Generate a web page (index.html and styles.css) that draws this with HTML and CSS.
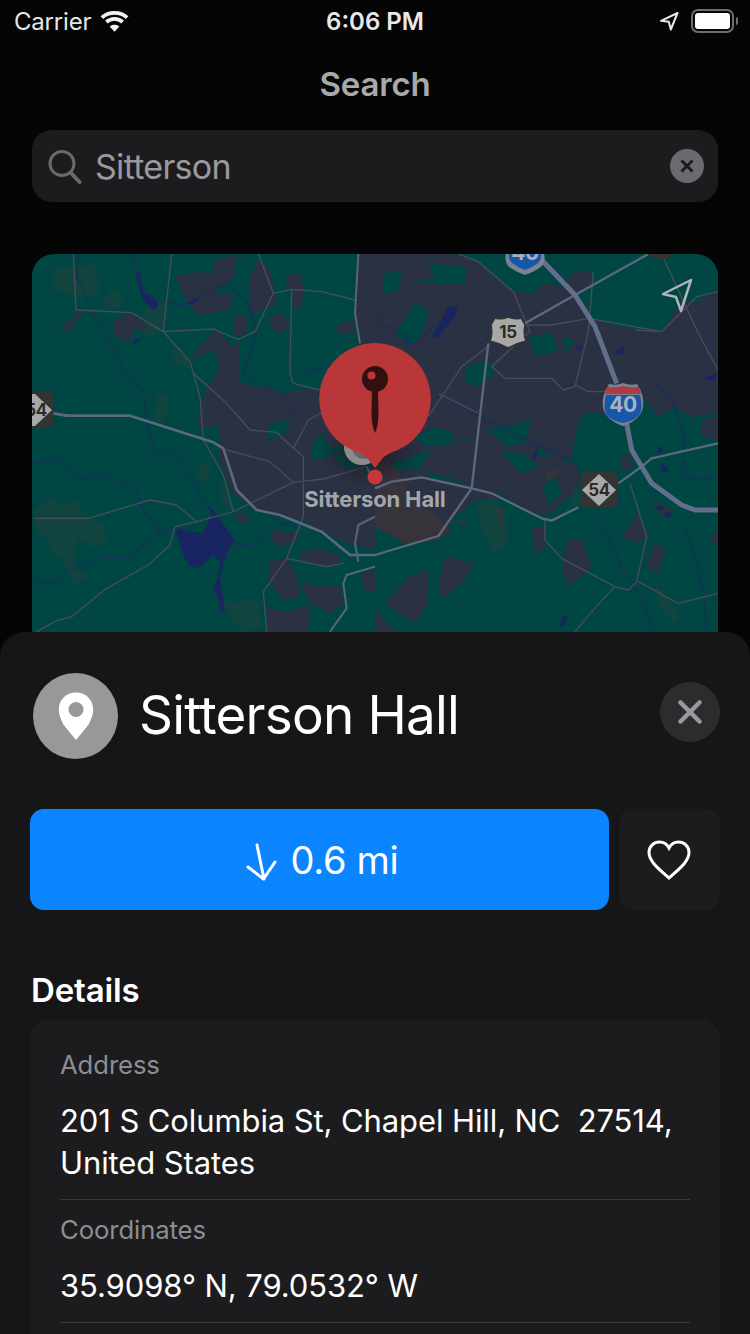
FILE: index.html
```html
<!DOCTYPE html>
<html lang="en">
<head>
<meta charset="utf-8">
<title>Search</title>
<link rel="stylesheet" href="styles.css">
</head>
<body>
<div class="screen">
  <div class="status">
    <div class="status-left">
      <span class="carrier">Carrier</span>
      <svg class="wifi" width="31" height="24" viewBox="0 0 32 24"><path class="wifi-arc" d="M3 9.500C10 3 22 3 29 9.500M7.600 14C12.400 9.800 19.600 9.800 24.400 14"/><path class="wifi-dot" d="M16 24l-5-5.200c2.800-2.400 7.200-2.400 10 0z"/></svg>
    </div>
    <span class="clock">6:06 PM</span>
    <div class="status-right">
      <svg width="20" height="20" viewBox="0 0 20 20"><path class="loc" d="M18.500 2 2 9.800l7.800 1 2 7.700z"/></svg>
      <div class="battery"><div class="battery-fill"></div></div>
      <div class="battery-tip"></div>
    </div>
  </div>

  <div class="nav">Search</div>

  <div class="search">
    <svg class="glass" width="36" height="36" viewBox="0 0 36 36"><circle class="glass-ring" cx="15" cy="14.500" r="12"/><path class="glass-ring glass-handle" d="M24 24l8.500 9"/></svg>
    <span class="search-text">Sitterson</span>
    <svg class="clear" width="34" height="34" viewBox="0 0 34 34"><circle class="clear-disc" cx="17" cy="17" r="17"/><path class="clear-x" d="M11.500 11.500l11 11m0-11l-11 11"/></svg>
  </div>

  <div class="map">
    <svg class="map-svg" width="686" height="378" viewBox="32 254 686 378">
      <defs>
        <radialGradient id="pinShade">
          <stop offset="0" stop-color="#15161c" stop-opacity=".75"/>
          <stop offset="1" stop-color="#15161c" stop-opacity="0"/>
        </radialGradient>
      </defs>
      <rect class="m-green" x="32" y="254" width="686" height="378"/>
      <g transform="translate(0 250) scale(.33333)">
        <path class="m-park" d="M160 55l130-10 5 90-60 5-60-20-15 0zM310 145l30-30 30 25-15 35-45 5zM400 230l50-70 50-10-5 90-50 20zM515 295l25-5 30 40-5 25-45-15zM470 435l30-5 10 20-20 70-25 0zM590 660l35-35 10 45-30 40zM660 700l15 0 20 80-25-10zM100 780l55-40 30 30 45-20 30 50 50 20 10 60-45 10-40-30-15 80 50 40-45 25-40-80-30-10-15-60-30 0zM670 1060l100-10 20 80-60 15-40-40z"/>
        <path class="m-slate" d="M610 440l50-90-20-50-70 30 20-30 60-60 50 50 20-20v130l80 15 50 15 50-10 60-5-5 65 45-10 125-30v460l-85-20-60-30-80-40-70-15-70-15-60-50-40-90v-110h-70zM1075 12h50v268h-45l-15-90zM525 80l65-15 50 5v-40l70-15-10 70-60 45h60l-10 50-90 15-30-25-30-60zM750 80l25-50 35 30 15 70v35l-75 30zM700 200l40-5v55l-40 10zM810 200l30-10 30 25-10 25-30 10-20-25zM1010 225l50-15 5 40h-55zM860 75l40-5 10 45-5 60h-25l-5-55-15-10zM340 210l55-20 55 45-50 5-15 35-15-5-25-10zM180 210l25 10 30-35 15 5-45 60zM820 840l80 10-20 30-40 10-30-30zM900 905l50-10 70 20v30l-60 5-60-20zM805 935l55-10 30 50 10 65-50 10-40-50zM900 1000l80 10 40-5 10 55-40 30-60-30zM800 1075l60 10 70-20-5 80h-125zM1085 965h40v60l-35-5zM700 790l40 0 10 20-30 10z"/>
        <path class="m-green" d="M810 520l60-10-20 50-50 10zM935 590l25-45 40 55 40-40-10 40-70 30h-25zM1000 620l70-20 30 40-60 20zM1080 660l45-40v60z"/>
        <path class="m-water" d="M405 70l15-5 10 60 40 25 5 20-15 10-30-30zM550 160l50-15-25 20zM395 270l25-5 10-5-25 25zM525 840l15-5 25 10 45 5 25-55-15-30 20 15 50 70 15 25-20 25-15 50-10 30 15 100-10 10-10-40-15-30 15-40 5-45-20-20-45 40-30-10-15-30z"/>
        <path class="m-river" d="M235 12l-5 68 50 110 40 70 30 50 20 50 60 60 10 100 25 90 45-5 50 55 60 110M100 640l70-10 85 60 45-18 110 48 20 60 50 70-40 30-60 45h-70l-95 35-65 40-50-10M395 12l25 78 40 60 90 15 130-65 70 70 20 80-40 125 110 55 50 70M905 365l130-20M480 850l45-20M690 880l60 5 60-30M805 790l30 30 60 10"/>
        <path class="m-minor" d="M220 12l8 168 167 8 95 57 80 90 30 105 10 130 60 105 30 110M515 12l-25 233 150-8 75 31 50-23 55-115 55-12 90 7 100 25M775 12l45 118M875 118l-5 252 10 30 80 20M580 370l100 90 70 80 80 7 50 48 30 25v180l-50 125-70 100 10 120M880 595l45-85 75-40M680 600l130 35 70 62 90-10 130-37M700 785l180-88M100 805h165l185-55 80 15 60 50M590 815l-65 15-15 55-65 60-125 70-105 85-45 12-60 33M590 815l110-30M860 925l120 25 50-10"/>
        <path class="m-road" d="M1075 12l-10 178 15 90M1125 950l-85 25-10 25 10 75-50 70M1100 650l25 50M1125 800l-50 25-10 55 10 55"/>
        <path class="m-west" d="M160 490l40 7h190l250 80 30 18 40 125 60 60 70 15 125 50 85 70h75"/>
      </g>
      <g transform="translate(375 250) scale(.33333)">
        <path class="m-park" d="M580 720l30 0 10 50-20 10zM835 1000l30 20 50 80-20 20-40-50zM300 760l60-10 40 60-5 70-40 30-30-60z"/>
        <path class="m-slate" d="M0 12h240l70 23 105 90 65 5 20-30 60 10 30-40 60-10v50l-50 20 40 70 80 30 140 15 45-70 60-35 64-10v360l-79 10-50-30-50 30-50-60-50-20-15 100-45-30h-60l-20 30-20 100-45 10-55-40-20 20-190-50-290 100zM170 600l130-40 170 50 130 30 20 60-90 90h-50l-130-70-60-20-160-40zM510 660l50-30 30 40-50 30h-20zM740 620l30-10v50h-30zM470 835l40-5v70l-30 5zM580 870h40l30 80-70 60-20-60zM740 860l50-70 30 70-30 20zM840 880l30 20-20 70-40-20zM210 920l90 20-40 60-60 50-10-50zM100 980l60-20v100l-40 60-90-60zM0 1080l60 65H0zM980 510l49-10v70l-49-10zM830 750l60 30-30 20zM1010 850h19v30h-19zM0 660h130l50 30 110 10 60 20 30 30h-80l-60 50-40 60-100 10L0 800z"/>
        <path class="m-green" d="M25 70l55-10-5 60-50 15zM110 90h70l-20-50 110 10v50H160zM120 160l40 20-10 40-20 50-30 10-40-30zM460 260l70-10 20 50-70 20zM560 260l40 10-30 40zM330 540l110-20 30-20-20 80-50 10zM270 350l70-20 20 40-50 40-40-10zM120 560l60-30 60 20-20 30-70 10zM920 60l109 0v60l-70 40zM375 600l70 10 50 40-60 20zM500 700l40-20 20 50-40 40z"/>
        <path class="m-hosp" d="M0 620l40 10 30 40 30 60 60 50 70 60-40 30-100 10L0 830zM510 670l50-15-30 30-15 20zM240 810l35 5-5 15zM370 770l15 5-15 70z"/>
        <path class="m-water" d="M170 260l50-90 30 0-10 30-50 60zM600 285l20 5-5 10-15-5zM720 305l30-15-5 20-20 5zM470 620l15-25 5 5-10 30zM850 590h10l5 20-15 0zM855 640l20 10 10 15-25 0zM845 770l20 0v10h-20zM870 785l20 0v15h-20zM560 1100l20 0-15 30-10-5zM985 385l40-15-5 25z"/>
        <path class="m-river" d="M0 190l30 40 60 20 10 40 100-80M190 430l180 100 130 60 110 50 5 40M660 800l40 60 40 90 50 80 50 115M840 400l50 40 40 120-10 120 60 10 49-10M730 740l10 20M925 820l40 120 20 80 10 125"/>
        <path class="m-minor" d="M250 12l60 23 105 90 50 120-35 30-80 75 40 35h140l35 35 35-10 40-165 15-180M450 225h80l110-20 220 40 105-105 64-15M860 245l-80-5M190 430l120 60M160 500l100-150 85-65M510 810v60l50 55 160 85 40 10 25-25 30-135-50-160M790 995l120 65 119-30M720 1010l-70 75-50 60M860 12l105 228 64 120M600 405l40 20h60"/>
        <path class="m-road-thick" d="M450 220l150-85 220-123M340 280l-50 435-100 143L0 915M290 715L140 682 50 695 0 715M290 715l60 15 150 75 30 7 80-40M730 700l70-50 30-25 199-45"/>
        <path class="m-major" d="M500 30l100 105 60 95 65 170M755 520l15 80 60 100 90 65 40 15h69"/>
      </g>
      <text class="m-label" x="375" y="507">Sitterson Hall</text>

      <path class="sh-dark" d="M32 392h16q5 0 5 5v26q0 5-5 5H32z"/>
      <path class="sh-light" d="M32 394h3l17 16-17 16h-3z"/>
      <text class="sh-num" x="36" y="416">54</text>

      <path class="sh-dark" d="M586 472h27q5 0 5 5v26q0 5-5 5h-27q-5 0-5-5v-26q0-5 5-5z"/>
      <path class="sh-light" d="M599 474l17 16-17 16-17-16z"/>
      <text class="sh-num" x="599" y="496">54</text>

      <path class="sh-light sh-15" d="M495 318q6 2 13-1 7 3 13 1l4 7q-2 10 1 16-9 2-18 7-9-5-18-7 3-6 1-16z"/>
      <text class="sh-num" x="508" y="338">15</text>

      <path class="sh-grey" d="M609 384q7 2 14-1 7 3 14 1 8 12 6 24-3 12-20 18-17-6-20-18-2-12 6-24z"/>
      <path class="sh-blue" d="M606 395h34q4 18-3 22-4 4-14 6-10-2-14-6-7-4-3-22z"/>
      <path class="sh-red" d="M607 387q8 1 16-1 8 2 16 1l2 7h-36z"/>
      <text class="sh-i" x="623" y="412">40</text>

      <path class="sh-grey" d="M506 254h38q2 6-2 12-6 5-17 9-11-4-17-9-4-6-2-12z"/>
      <path class="sh-blue" d="M509 254h32q1 5-3 9-5 4-13 7-8-3-13-7-4-4-3-9z"/>
      <text class="sh-i" x="525" y="260">40</text>

      <path class="sh-dark" d="M648 254h26l-6 4-7 2-7-2z"/>

      <path class="m-nav" d="M691 280 663 294l13 3 5 14z"/>

      <ellipse cx="370" cy="450" rx="52" ry="38" fill="url(#pinShade)"/>
      <circle class="pin-grey" cx="362" cy="447" r="18"/>
      <circle class="pin-grey2" cx="364" cy="447" r="12"/>
      <path class="pin-red" d="M375 343a56 56 0 0 1 23 107q-12 4-16 9l-7 9-7-9q-4-5-16-9a56 56 0 0 1 23-107z"/>
      <circle class="pin-dot" cx="375" cy="477" r="7.500"/>
      <circle class="pin-ink" cx="375" cy="379" r="13"/>
      <path class="pin-ink" d="M372 388h6l.5 27q-.5 12-3.500 18-3-6-3.500-18z"/>
      <circle class="pin-hole" cx="371.500" cy="375.500" r="4"/>
    </svg>
  </div>

  <div class="sheet">
    <div class="head">
      <div class="place-icon">
        <svg width="36" height="48" viewBox="0 0 36 48"><path class="place-pin" fill-rule="evenodd" d="M18 .5C8 .5.800 8 .800 17.500c0 5.500 2 9.500 4.500 15L18 48l12.700-15.500c2.500-5.500 4.500-9.500 4.500-15C35.200 8 28 .5 18 .5zM18 10a7.500 7.500 0 1 1 0 15 7.500 7.500 0 0 1 0-15z"/></svg>
      </div>
      <h1 class="place-name">Sitterson Hall</h1>
      <div class="close">
        <svg width="24" height="24" viewBox="0 0 24 24"><path class="close-x" d="M2.500 2.500l19 19m0-19l-19 19"/></svg>
      </div>
    </div>

    <div class="actions">
      <div class="go">
        <svg class="go-arrow" width="32" height="38" viewBox="0 0 32 38"><path class="arrow-line" d="M11 2l7 34M2 24l15.500 12L29 19"/></svg>
        <span class="go-text">0.6 mi</span>
      </div>
      <div class="fav">
        <svg class="heart-icon" width="44" height="40" viewBox="0 0 44 40"><path class="heart" d="M22 38C12 29 2 21.500 2 12.500 2 6 7 2 12.500 2 16.500 2 20 4 22 8c2-4 5.500-6 9.500-6C37 2 42 6 42 12.500 42 21.500 32 29 22 38z"/></svg>
      </div>
    </div>

    <h2 class="section">Details</h2>
    <div class="card">
      <div class="row row-address">
        <div class="row-label">Address</div>
        <div class="row-value">201 S Columbia St, Chapel Hill, NC&nbsp; 27514, United States</div>
      </div>
      <div class="row row-coords">
        <div class="row-label">Coordinates</div>
        <div class="row-value">35.9098° N, 79.0532° W</div>
      </div>
    </div>
  </div>
</div>
</body>
</html>
```
FILE: styles.css
```css
* { box-sizing: border-box; }
html, body { margin: 0; padding: 0; background: #050505; }
body { font-family: Inter, "Liberation Sans", sans-serif; color: #fff; }
.screen { width: 750px; height: 1334px; overflow: hidden; display: flex; flex-direction: column; background: #050505; }

.status { height: 42px; flex: none; display: flex; align-items: center; justify-content: space-between; padding: 0 12px; }
.status-left { display: flex; align-items: center; gap: 10px; width: 220px; padding-left: 2px; }
.carrier { font-size: 24px; letter-spacing: -.2px; color: #e6e6e6; }
.wifi { margin-top: -2px; margin-left: -2px; }
.wifi-arc { fill: none; stroke: #f2f2f2; stroke-width: 4; }
.wifi-dot { fill: #f2f2f2; }
.clock { font-size: 24px; font-weight: 600; color: #e8e8e8; }
.status-right { display: flex; align-items: center; width: 220px; justify-content: flex-end; }
.loc { fill: none; stroke: #e8e8e8; stroke-width: 2; stroke-linejoin: round; }
.battery { width: 43px; height: 24px; margin-left: 12px; border: 2.5px solid #6d6d6d; border-radius: 7px; padding: 2px; }
.battery-fill { width: 100%; height: 100%; background: #fff; border-radius: 3px; }
.battery-tip { width: 2px; height: 8px; margin-left: 2px; background: #6d6d6d; border-radius: 0 2px 2px 0; }

.nav { height: 88px; flex: none; text-align: center; font-size: 33px; font-weight: 600; line-height: 84px; color: #a9a9a9; letter-spacing: -.2px; }

.search { height: 72px; flex: none; margin: 0 32px; background: #1c1c1e; border-radius: 20px; display: flex; align-items: center; padding: 0 15px; }
.glass { flex: none; margin-top: 2px; }
.glass-ring { fill: none; stroke: #6a6a6c; stroke-width: 3; }
.glass-handle { stroke-width: 4; stroke-linecap: round; }
.search-text { flex: 1; margin-left: 12px; font-size: 34px; color: #9a9a9e; letter-spacing: -.7px; }
.clear { flex: none; margin-top: -1px; margin-right: -1px; }
.clear-disc { fill: #6a6a6f; }
.clear-x { stroke: #1c1c1e; stroke-width: 3; fill: none; }

.map { height: 378px; flex: none; margin: 52px 32px 0; border-radius: 22px 22px 0 0; overflow: hidden; }
.map-svg { display: block; }
.m-green { fill: #004743; }
.m-slate { fill: #2a3142; }
.m-park { fill: #12443f; }
.m-hosp { fill: #37333a; }
.m-water { fill: #192560; }
.m-river { fill: none; stroke: #15305a; stroke-width: 4; stroke-linejoin: round; }
.m-minor { fill: none; stroke: #484c58; stroke-width: 4; stroke-linejoin: round; }
.m-road { fill: none; stroke: #5b6579; stroke-width: 6; stroke-linejoin: round; }
.m-road-thick { fill: none; stroke: #5d6880; stroke-width: 7; stroke-linejoin: round; }
.m-west { fill: none; stroke: #5d6880; stroke-width: 8; stroke-linejoin: round; }
.m-major { fill: none; stroke: #636e8c; stroke-width: 15; stroke-linejoin: round; }
.m-label { font-family: Inter, sans-serif; font-size: 22px; font-weight: 700; fill: #a3a6ac; text-anchor: middle; letter-spacing: -.15px; }
.sh-dark { fill: #333333; }
.sh-light { fill: #a8a8a8; }
.sh-15 { stroke: #333333; stroke-width: 1.500; }
.sh-num { font-family: Inter, sans-serif; font-size: 17px; font-weight: 700; fill: #2b2b2b; text-anchor: middle; letter-spacing: -.4px; }
.sh-grey { fill: #7b8291; }
.sh-blue { fill: #1857a8; }
.sh-red { fill: #b03a44; }
.sh-i { font-family: Inter, sans-serif; font-size: 21px; font-weight: 700; fill: #a8b0be; text-anchor: middle; letter-spacing: -.4px; }
.m-nav { fill: none; stroke: #aeb4b8; stroke-width: 2.500; stroke-linejoin: round; }
.pin-grey { fill: #8b8b8d; }
.pin-grey2 { fill: #66666a; }
.pin-red { fill: #b93639; }
.pin-dot { fill: #c4373a; }
.pin-ink { fill: #33100f; }
.pin-hole { fill: #b93639; }

.sheet { flex: 1; min-height: 0; background: #161618; border-radius: 24px 24px 0 0; padding: 41px 30px 0; }
.head { display: flex; align-items: center; height: 86px; padding-left: 3px; }
.place-icon { width: 85px; height: 86px; flex: none; border-radius: 50%; background: #989898; display: flex; align-items: center; justify-content: center; }
.place-name { flex: 1; margin: -2px 0 0 21px; font-size: 53px; font-weight: 400; letter-spacing: -.8px; line-height: 86px; }
.place-pin { fill: #fff; }
.close { width: 60px; height: 60px; flex: none; border-radius: 50%; background: #2c2c2f; display: flex; align-items: center; justify-content: center; margin-top: -9px; }
.close-x { stroke: #98989d; stroke-width: 4.500; stroke-linecap: round; fill: none; }

.actions { display: flex; gap: 10px; margin-top: 50px; height: 101px; }
.go { flex: 1; background: #0a84ff; border-radius: 14px; display: flex; align-items: center; justify-content: center; gap: 13px; padding-left: 5px; }
.go-text { font-size: 38px; letter-spacing: -.3px; color: #fff; }
.go-arrow { margin-top: 4px; }
.arrow-line { fill: none; stroke: #fff; stroke-width: 3; stroke-linecap: round; stroke-linejoin: round; }
.fav { width: 101px; flex: none; background: #1c1c1e; border-radius: 14px; display: flex; align-items: center; justify-content: center; }
.heart-icon { margin-right: 2px; }
.heart { fill: none; stroke: #fff; stroke-width: 3; }

.section { margin: 61px 0 0 1px; font-size: 33px; font-weight: 600; line-height: 38px; letter-spacing: -.15px; }
.card { margin-top: 10px; height: 400px; background: #1c1c1e; border-radius: 20px; padding: 0 30px; }
.row { border-bottom: 1px solid #3a3a3c; }
.row-address { height: 181px; padding-top: 30px; }
.row-coords { height: 123px; padding-top: 14px; }
.row-label { font-size: 25.700px; line-height: 32px; color: #8d8d93; letter-spacing: -.1px; }
.row-value { margin-top: 19px; font-size: 31px; line-height: 42px; letter-spacing: -.1px; color: #fff; }
```
